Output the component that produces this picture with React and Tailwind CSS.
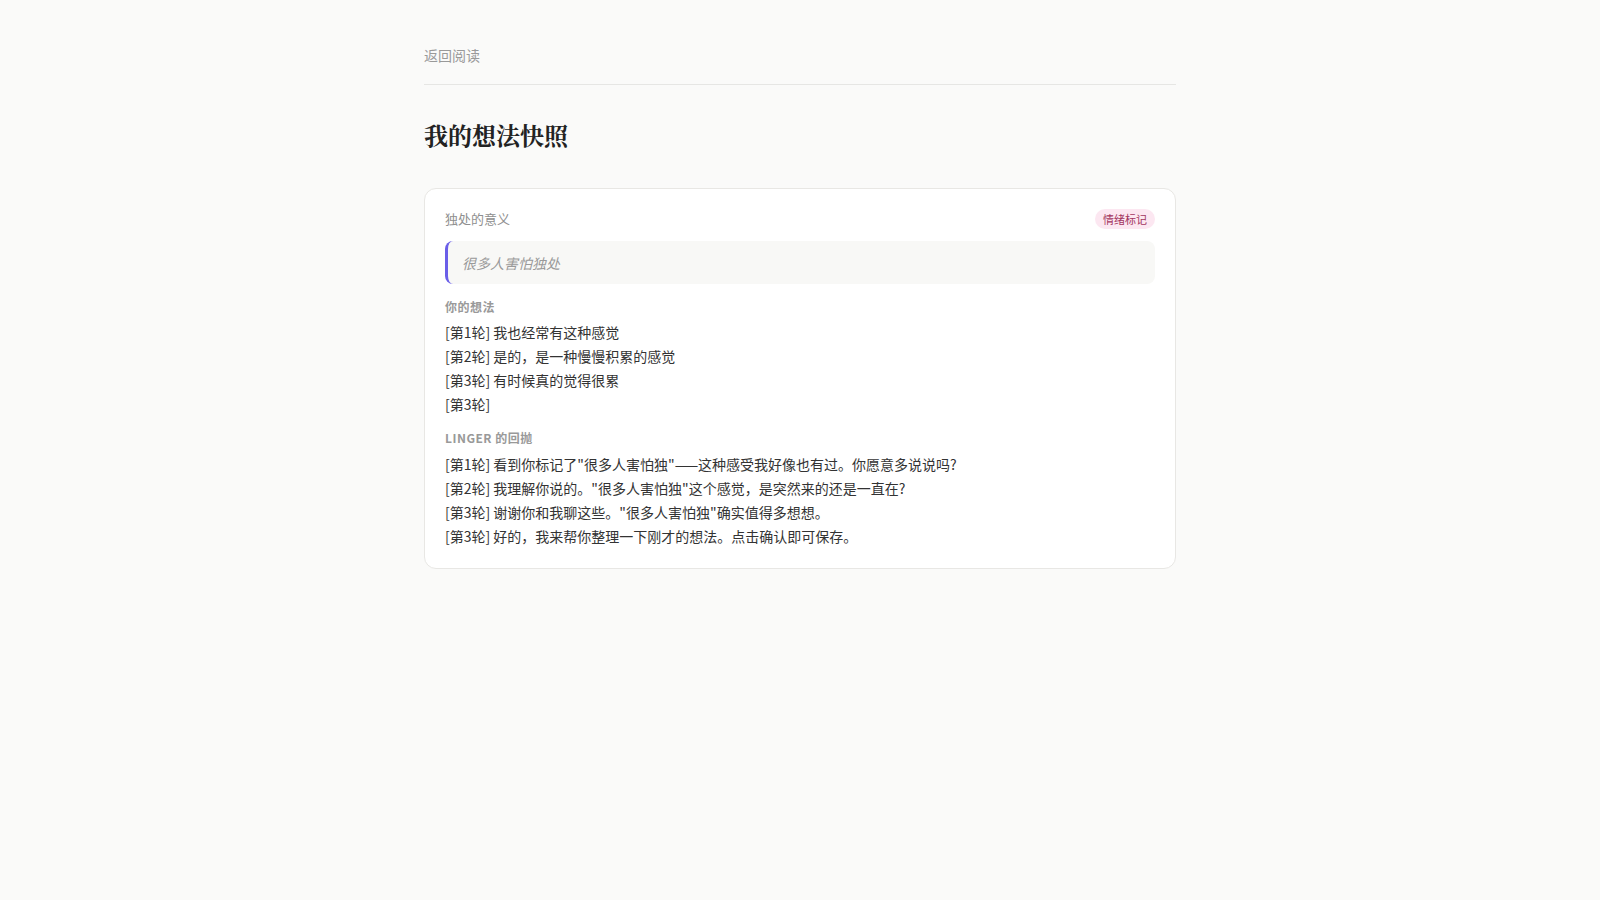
import React from 'react';

const userLines = [
  '[第1轮] 我也经常有这种感觉',
  '[第2轮] 是的，是一种慢慢积累的感觉',
  '[第3轮] 有时候真的觉得很累',
  '[第3轮]',
];

const lingerLines = [
  '[第1轮] 看到你标记了"很多人害怕独"——这种感受我好像也有过。你愿意多说说吗?',
  '[第2轮] 我理解你说的。"很多人害怕独"这个感觉，是突然来的还是一直在?',
  '[第3轮] 谢谢你和我聊这些。"很多人害怕独"确实值得多想想。',
  '[第3轮] 好的，我来帮你整理一下刚才的想法。点击确认即可保存。',
];

const App = () => {
  return (
    <div
      className="min-h-screen bg-[#fafaf9] text-[#2b2b2b]"
      style={{ fontFamily: '"Noto Sans CJK SC", "Noto Sans", sans-serif' }}
    >
      <div className="max-w-[752px] mx-auto pt-[45px]">
        {/* Header */}
        <div className="pb-[19px] border-b border-[#e6e6e4]">
          <button className="block text-sm leading-5 text-[#999999] hover:text-gray-600">返回阅读</button>
        </div>

        <h1
          className="mt-[34px] text-2xl leading-8 font-bold text-[#222222]"
          style={{ fontFamily: '"Noto Serif CJK SC", "Noto Serif SC", serif' }}
        >
          我的想法快照
        </h1>

        {/* Snapshot card */}
        <div className="mt-[37px] bg-white border border-[#e8e7e4] rounded-xl px-5 pt-5 pb-5">
          <div className="flex items-center justify-between h-5">
            <span className="text-[13px] leading-5 text-[#8f8f8f]">独处的意义</span>
            <span className="text-[11px] leading-5 px-2 rounded-full bg-[#fce7f1] text-[#a3355f]">情绪标记</span>
          </div>

          <div className="mt-3 h-[43px] flex items-center border-l-[3px] border-[#6a5ee8] bg-[#f8f8f6] rounded-lg pl-3.5">
            <p className="text-sm italic text-[#9a9a9a]">很多人害怕独处</p>
          </div>

          <div className="mt-[15px]">
            <h3 className="text-xs leading-4 font-bold tracking-[0.5px] text-[#999999]">你的想法</h3>
            <div className="mt-[5px]">
              {userLines.map((line, i) => (
                <p key={i} className="text-sm leading-6 text-[#333333]">{line}</p>
              ))}
            </div>
          </div>

          <div className="mt-3.5">
            <h3 className="text-xs leading-4 font-bold tracking-[0.5px] text-[#999999]">LINGER 的回抛</h3>
            <div className="mt-1.5">
              {lingerLines.map((line, i) => (
                <p key={i} className="text-sm leading-6 text-[#333333]">{line}</p>
              ))}
            </div>
          </div>
        </div>
      </div>
    </div>
  );
};

export default App;
